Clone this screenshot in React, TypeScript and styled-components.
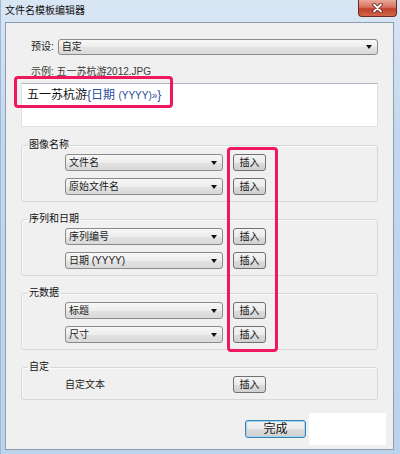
import React from 'react';
import styled, { createGlobalStyle } from 'styled-components';

const GlobalStyle = createGlobalStyle`
  html, body {
    margin: 0;
    padding: 0;
    background: #ffffff;
  }
  body {
    font-family: "Liberation Sans", "Noto Sans CJK SC", sans-serif;
    font-size: 10px;
    color: #1b1b1b;
  }
`;

const Window = styled.div`
  position: relative;
  width: 400px;
  height: 454px;
  box-sizing: border-box;
  display: flex;
  flex-direction: column;
  padding: 0 6px 4px 4px;
  background: linear-gradient(#d9e6f4, #c2d7ee 30%, #bcd3ec);
  border-left: 1px solid #9fb8d4;
`;

const TitleBar = styled.div`
  height: 22px;
  display: flex;
  align-items: center;
  justify-content: space-between;
`;

const Title = styled.div`
  font-size: 10px;
  line-height: 14px;
  color: #111;
`;

const CloseButton = styled.div`
  align-self: flex-start;
  width: 39px;
  height: 17px;
  margin-right: -3px;
  box-sizing: border-box;
  border: 1px solid #6d2a22;
  border-top: none;
  border-radius: 0 0 4px 4px;
  background: linear-gradient(#e9a99b, #d7715d 45%, #c1402a 55%, #d2654a);
  display: flex;
  align-items: center;
  justify-content: center;
`;

const Content = styled.div`
  flex: 1;
  display: flex;
  flex-direction: column;
  padding: 0 15px;
  background: #f0f0f0;
  border: 1px solid #8d9eb2;
`;

const PresetRow = styled.div`
  margin-top: 16px;
  padding-left: 10px;
  display: flex;
  align-items: center;
  gap: 4px;
`;

const Label = styled.span`
  font-size: 10px;
  line-height: 14px;
  white-space: nowrap;
`;

const Combo = styled.div<{ $height?: number }>`
  flex: 1;
  height: ${p => p.$height ?? 17}px;
  box-sizing: border-box;
  border: 1px solid #8a8a8a;
  border-radius: 3px;
  background: linear-gradient(#f7f7f7, #ededed 50%, #e3e3e3 51%, #d9d9d9);
  display: flex;
  align-items: center;
  justify-content: space-between;
  padding: 0 5px 0 3px;
  font-size: 10px;
  line-height: 14px;
`;

const Arrow = styled.span`
  width: 0;
  height: 0;
  border-left: 3.5px solid transparent;
  border-right: 3.5px solid transparent;
  border-top: 4px solid #111;
`;

const Example = styled.div`
  margin-top: 10px;
  padding-left: 10px;
  font-size: 10px;
  line-height: 14px;
  color: #3a3a3a;
`;

const TemplateBox = styled.div`
  margin-top: 4px;
  height: 44px;
  box-sizing: border-box;
  background: #ffffff;
  border: 1px solid #dbe2ea;
  border-top-color: #abb5c2;
  padding: 4px 5px;
  font-size: 12px;
  line-height: 14px;
  color: #111;
`;

const Token = styled.span`
  color: #2a4d9c;
`;

const TokenSmall = styled.span`
  font-size: 10px;
`;

const Group = styled.fieldset<{ $first?: boolean }>`
  margin: ${p => (p.$first ? 11 : 10)}px 0 0;
  padding: 2px 6px 6px;
  border: 1px solid #d6d9dc;
  border-radius: 3px;
  box-shadow: inset 1px 1px 0 #fafafa;
  min-width: 0;
`;

const Legend = styled.legend`
  padding: 0 1px;
  font-size: 10px;
  line-height: 14px;
  color: #111;
`;

const Rows = styled.div`
  margin-left: 37px;
  display: flex;
  flex-direction: column;
  gap: 7px;
`;

const Row = styled.div`
  display: grid;
  grid-template-columns: 158px 33px;
  column-gap: 10px;
  align-items: center;
`;

const InsertButton = styled.button`
  width: 33px;
  height: 17px;
  box-sizing: border-box;
  padding: 0;
  border: 1px solid #707070;
  border-radius: 3px;
  background: linear-gradient(#f4f4f4, #ebebeb 50%, #dddddd 51%, #d0d0d0);
  font-family: inherit;
  font-size: 10px;
  line-height: 14px;
  color: #111;
`;

const Footer = styled.div`
  margin-top: 13px;
  margin-right: -8px;
  display: flex;
  justify-content: flex-end;
  align-items: center;
  gap: 3px;
`;

const DoneButton = styled.button`
  width: 61px;
  height: 18px;
  box-sizing: border-box;
  padding: 0;
  border: 1px solid #3c7fb1;
  border-radius: 3px;
  background: linear-gradient(#f2f2f2, #ebebeb 50%, #dddddd 51%, #cfcfcf);
  box-shadow: inset 0 0 0 1px #9fd8f5;
  font-family: inherit;
  font-size: 12px;
  line-height: 14px;
  color: #111;
`;

const Patch = styled.div`
  width: 77px;
  height: 32px;
  background: #ffffff;
`;

const Marker = styled.div<{ $x: number; $y: number; $w: number; $h: number }>`
  position: absolute;
  left: ${p => p.$x}px;
  top: ${p => p.$y}px;
  width: ${p => p.$w}px;
  height: ${p => p.$h}px;
  box-sizing: border-box;
  border: 3px solid #f0185c;
  border-radius: 4px;
  pointer-events: none;
`;

const groups = [
  { title: '图像名称', items: ['文件名', '原始文件名'] },
  { title: '序列和日期', items: ['序列编号', '日期 (YYYY)'] },
  { title: '元数据', items: ['标题', '尺寸'] },
];

const App: React.FC = () => (
  <>
    <GlobalStyle />
    <Window>
      <TitleBar>
        <Title>文件名模板编辑器</Title>
        <CloseButton>
          <svg width="11" height="10" viewBox="0 0 11 10">
            <path d="M2 1.5 L9 8.5 M9 1.5 L2 8.5" stroke="#5a1d16" strokeWidth="3.4" strokeLinecap="round" />
            <path d="M2 1.5 L9 8.5 M9 1.5 L2 8.5" stroke="#ffffff" strokeWidth="1.8" strokeLinecap="round" />
          </svg>
        </CloseButton>
      </TitleBar>
      <Content>
        <PresetRow>
          <Label>预设:</Label>
          <Combo $height={16}>
            <span>自定</span>
            <Arrow />
          </Combo>
        </PresetRow>
        <Example>示例: 五一苏杭游2012.JPG</Example>
        <TemplateBox>
          五一苏杭游<Token>{'{'}日期 <TokenSmall>(YYYY)»</TokenSmall>{'}'}</Token>
        </TemplateBox>

        {groups.map((g, gi) => (
          <Group key={g.title} $first={gi === 0}>
            <Legend>{g.title}</Legend>
            <Rows>
              {g.items.map(item => (
                <Row key={item}>
                  <Combo>
                    <span>{item}</span>
                    <Arrow />
                  </Combo>
                  <InsertButton>插入</InsertButton>
                </Row>
              ))}
            </Rows>
          </Group>
        ))}

        <Group>
          <Legend>自定</Legend>
          <Rows>
            <Row>
              <Label>自定文本</Label>
              <InsertButton>插入</InsertButton>
            </Row>
          </Rows>
        </Group>

        <Footer>
          <DoneButton>完成</DoneButton>
          <Patch />
        </Footer>
      </Content>
      <Marker $x={13} $y={76} $w={159} $h={32} />
      <Marker $x={226} $y={147} $w={51} $h={205} />
    </Window>
  </>
);

export default App;
